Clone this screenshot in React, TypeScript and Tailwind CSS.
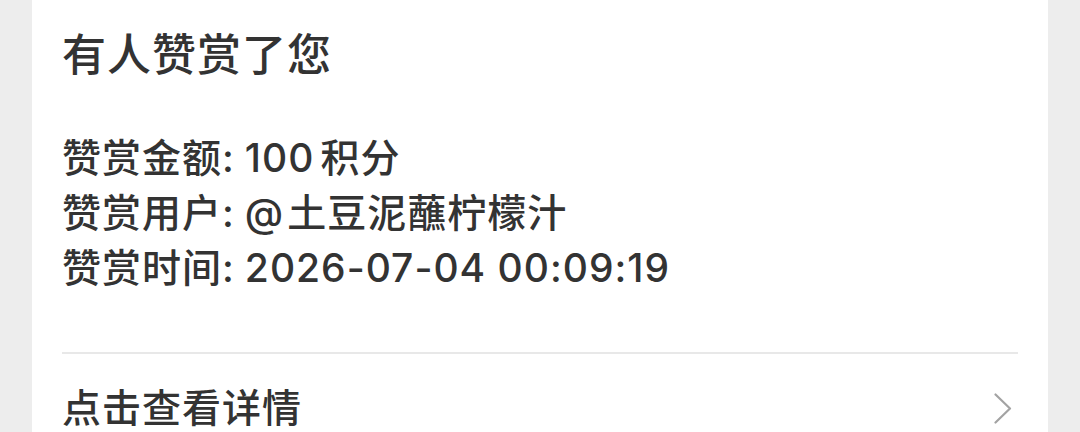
const rows = [
  { label: '赞赏金额', value: <>100<span className="ml-[6px]">积分</span></> },
  { label: '赞赏用户', value: <>@<span className="ml-[3px]">土豆泥蘸柠檬汁</span></> },
  { label: '赞赏时间', value: <>2026-07-04 00:09:19</> },
]

export default function App() {
  return (
    <div
      className="h-[432px] overflow-hidden bg-[#ededed] px-[32px] text-[#333333]"
      style={{ fontFamily: 'Inter, "Noto Sans CJK SC", sans-serif' }}
    >
      <div className="h-full bg-white px-[30px]">
        {/* Title */}
        <div className="pt-[33px] text-[44px] font-medium leading-[44px] tracking-[1px]">有人赞赏了您</div>

        {/* Details */}
        <div className="pt-[53px] text-[39px] font-medium leading-[55px] tracking-[1px]">
          {rows.map((r) => (
            <div key={r.label}>
              {r.label}:<span className="ml-[10px]">{r.value}</span>
            </div>
          ))}
        </div>

        {/* Footer link */}
        <div className="mt-[57px] border-t-2 border-[#e8e8e8]">
          <div className="flex h-[106px] items-center justify-between">
            <span className="text-[39px] font-medium leading-none tracking-[1px]">点击查看详情</span>
            <svg width="18" height="31" viewBox="0 0 18 31" className="mr-[6px] mt-[2px]" fill="none">
              <polyline points="1.5,1.5 16,15.5 1.5,29.5" stroke="#a3a3a3" strokeWidth="2.2" strokeLinecap="round" strokeLinejoin="round" />
            </svg>
          </div>
        </div>
      </div>
    </div>
  )
}
